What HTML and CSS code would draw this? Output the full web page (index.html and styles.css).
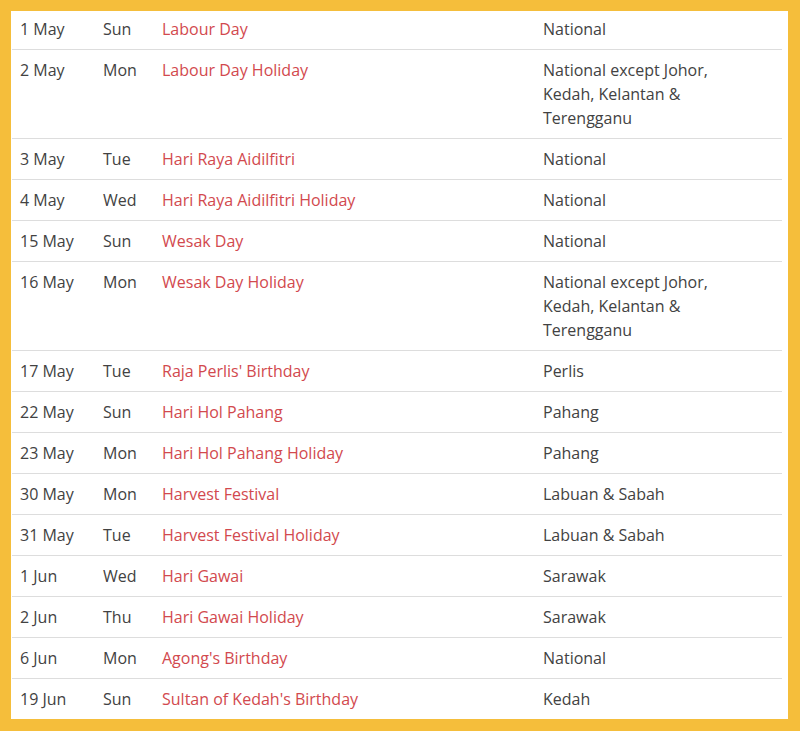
FILE: index.html
```html
<!DOCTYPE html>
<html>
<head>
<meta charset="utf-8">
<link rel="stylesheet" href="styles.css">
</head>
<body>
<div class="frame">
  <div class="panel">
    <table class="holidays">
      <colgroup>
        <col class="c-date"><col class="c-day"><col class="c-name"><col class="c-state">
      </colgroup>
      <tbody>
        <tr><td>1 May</td><td>Sun</td><td class="name">Labour Day</td><td class="state">National</td></tr>
        <tr><td>2 May</td><td>Mon</td><td class="name">Labour Day Holiday</td><td class="state">National except Johor, Kedah, Kelantan &amp; Terengganu</td></tr>
        <tr><td>3 May</td><td>Tue</td><td class="name">Hari Raya Aidilfitri</td><td class="state">National</td></tr>
        <tr><td>4 May</td><td>Wed</td><td class="name">Hari Raya Aidilfitri Holiday</td><td class="state">National</td></tr>
        <tr><td>15 May</td><td>Sun</td><td class="name">Wesak Day</td><td class="state">National</td></tr>
        <tr><td>16 May</td><td>Mon</td><td class="name">Wesak Day Holiday</td><td class="state">National except Johor, Kedah, Kelantan &amp; Terengganu</td></tr>
        <tr><td>17 May</td><td>Tue</td><td class="name">Raja Perlis' Birthday</td><td class="state">Perlis</td></tr>
        <tr><td>22 May</td><td>Sun</td><td class="name">Hari Hol Pahang</td><td class="state">Pahang</td></tr>
        <tr><td>23 May</td><td>Mon</td><td class="name">Hari Hol Pahang Holiday</td><td class="state">Pahang</td></tr>
        <tr><td>30 May</td><td>Mon</td><td class="name">Harvest Festival</td><td class="state">Labuan &amp; Sabah</td></tr>
        <tr><td>31 May</td><td>Tue</td><td class="name">Harvest Festival Holiday</td><td class="state">Labuan &amp; Sabah</td></tr>
        <tr><td>1 Jun</td><td>Wed</td><td class="name">Hari Gawai</td><td class="state">Sarawak</td></tr>
        <tr><td>2 Jun</td><td>Thu</td><td class="name">Hari Gawai Holiday</td><td class="state">Sarawak</td></tr>
        <tr><td>6 Jun</td><td>Mon</td><td class="name">Agong's Birthday</td><td class="state">National</td></tr>
        <tr><td>19 Jun</td><td>Sun</td><td class="name">Sultan of Kedah's Birthday</td><td class="state">Kedah</td></tr>
      </tbody>
    </table>
  </div>
</div>
</body>
</html>
```

FILE: styles.css
```css
html, body {
  margin: 0;
  padding: 0;
}
body {
  background: #f5be3b;
  font-family: "Open Sans", "DejaVu Sans", sans-serif;
}
.frame {
  width: 800px;
  height: 731px;
  padding: 11px 12px 12px 11px;
  box-sizing: border-box;
}
.panel {
  background: #ffffff;
  height: 708px;
  overflow: hidden;
  padding: 0 6px 0 1px;
}
.holidays {
  width: 770px;
  border-collapse: collapse;
  table-layout: fixed;
  margin-top: -2px;
  font-size: 16px;
  line-height: 24px;
  color: #424242;
}
.c-date { width: 83px; }
.c-day { width: 59px; }
.c-name { width: 381px; }
.c-state { width: 247px; }
.holidays td {
  padding: 8px 8px;
  vertical-align: top;
  border-bottom: 1px solid #dddddd;
}
.holidays td.name {
  color: #d2494e;
}
.holidays td.state {
  padding-right: 40px;
}
```
